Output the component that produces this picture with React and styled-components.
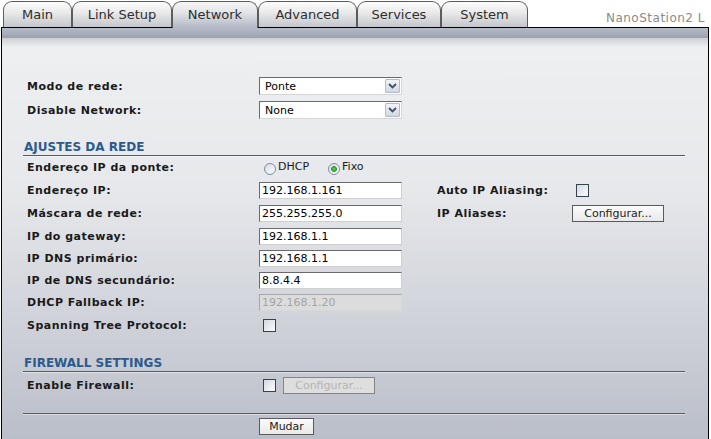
import React from 'react';
import styled, { createGlobalStyle } from 'styled-components';

const GlobalStyle = createGlobalStyle`
  html, body {
    margin: 0;
    padding: 0;
    background: #fff;
  }
  body {
    font-family: "DejaVu Sans", Verdana, sans-serif;
    overflow: hidden;
  }
`;

const TabBar = styled.div`
  display: flex;
  align-items: flex-end;
  height: 27px;
  padding-left: 3px;
`;

const Tab = styled.div`
  box-sizing: border-box;
  width: ${p => p.$w}px;
  height: ${p => (p.$active ? 27 : 26)}px;
  margin-bottom: ${p => (p.$active ? -1 : 0)}px;
  position: relative;
  z-index: ${p => (p.$active ? 1 : 0)};
  border: 1px solid #5c5c5c;
  border-bottom: none;
  border-radius: 9px 9px 0 0;
  background: ${p =>
    p.$active
      ? 'linear-gradient(#f5f5f5, #e2e4e8 40%, #b1b7c5)'
      : 'linear-gradient(#fcfcfc, #ebebec 40%, #c4c6cb)'};
  display: flex;
  align-items: center;
  justify-content: center;
  padding-bottom: ${p => (p.$active ? 1 : 0)}px;
  font-size: 13px;
  color: #2e2e2e;
  cursor: pointer;
`;

const Brand = styled.div`
  margin-left: auto;
  align-self: center;
  padding-top: 8px;
  padding-right: 6px;
  font-size: 12px;
  letter-spacing: 0.5px;
  color: #8a8a8a;
`;

const Panel = styled.div`
  box-sizing: border-box;
  margin-left: 1px;
  width: 708px;
  border: 1px solid #000;
  border-bottom: none;
`;

const Band = styled.div`
  height: 10px;
  background: linear-gradient(#b4bac7, #a3a9b7 70%, #9aa0ae);
`;

const Content = styled.div`
  padding: 36px 0 40px 21px;
  background: linear-gradient(#cdced2 0, #eeeff1 9px, #e6e8eb 35%, #b4b8c4 100%);
`;

const Section = styled.div`
  width: 662px;
`;

const Heading = styled.div`
  margin-top: ${p => p.$top}px;
  padding-left: 1px;
  line-height: 16px;
  font-size: 12px;
  font-weight: bold;
  color: #2b5a8e;
  border-bottom: 1px solid #3d5e8e;
  box-shadow: 0 1px 0 rgba(255, 255, 255, 0.45);
`;

const Row = styled.div`
  display: grid;
  grid-template-columns: 232px 178px 135px 1fr;
  align-items: center;
  height: ${p => p.$h}px;
  padding-left: 4px;
`;

const Label = styled.div`
  font-size: 11px;
  font-weight: bold;
  letter-spacing: 0.5px;
  color: #1a1a1a;
  white-space: nowrap;
`;

const TextInput = styled.input`
  display: block;
  box-sizing: border-box;
  width: 143px;
  height: 17px;
  margin: 0;
  padding: 0 2px;
  border: 1px solid;
  border-color: #6a6a6a #cfcfcf #cfcfcf #6a6a6a;
  background: #fff;
  font-family: "DejaVu Sans", Verdana, sans-serif;
  font-size: 11px;
  color: #000;
  outline: none;

  &:disabled {
    background: #dcdcdc;
    color: #a4a4a4;
    border-color: #a6a6a6 #d8d8d8 #d8d8d8 #a6a6a6;
  }
`;

const SelectWrap = styled.div`
  position: relative;
  width: 143px;
  height: 18px;
`;

const Select = styled.select`
  display: block;
  box-sizing: border-box;
  appearance: none;
  width: 100%;
  height: 18px;
  margin: 0;
  padding: 0 0 0 5px;
  border: 1px solid;
  border-color: #6a6a6a #d6d6d6 #d6d6d6 #6a6a6a;
  border-radius: 0;
  background: #fff;
  font-family: "DejaVu Sans", Verdana, sans-serif;
  font-size: 11px;
  color: #000;
  outline: none;
`;

const ArrowBox = styled.span`
  position: absolute;
  top: 2px;
  right: 2px;
  box-sizing: border-box;
  width: 15px;
  height: 14px;
  border: 1px solid #b3bac9;
  border-radius: 1px;
  background: linear-gradient(#f1f3f7, #d3d8e1);
  display: flex;
  align-items: center;
  justify-content: center;
  pointer-events: none;
`;

const Button = styled.button`
  display: block;
  box-sizing: border-box;
  width: ${p => p.$w}px;
  height: 17px;
  margin: 0 0 0 ${p => p.$ml || 0}px;
  padding: 0;
  border: 1px solid #5a5a5a;
  background: linear-gradient(#fbfbfb, #e9e9e9);
  font-family: "DejaVu Sans", Verdana, sans-serif;
  font-size: 11px;
  color: #222;

  &:disabled {
    background: #dedede;
    color: #b4b4b4;
    border-color: #858585;
  }
`;

const Check = styled.input`
  appearance: none;
  box-sizing: border-box;
  width: 13px;
  height: 13px;
  margin: 0 0 0 4px;
  border: 1px solid #35434f;
  background: linear-gradient(135deg, #d3d8e1, #fbfcfd);
  flex: none;
`;

const Controls = styled.div`
  display: flex;
  align-items: center;
`;

const RadioOption = styled.label`
  display: flex;
  align-items: center;
  gap: 2px;
  margin-left: ${p => p.$ml}px;
  font-size: 11px;
  color: #1a1a1a;
`;

const Radio = styled.input`
  appearance: none;
  box-sizing: border-box;
  width: 12px;
  height: 12px;
  margin: 2px 0 0 0;
  border: 1px solid #7f8ea2;
  border-radius: 50%;
  background: ${p =>
    p.checked
      ? 'radial-gradient(circle, #6fd05c 0, #2f9a2a 2.6px, transparent 3.2px), linear-gradient(135deg, #d6dbe3, #fdfdfd)'
      : 'linear-gradient(135deg, #d6dbe3, #fdfdfd)'};
`;

const RadioText = styled.span`
  margin-top: -3px;
`;

const Divider = styled.div`
  height: 15px;
  border-bottom: 1px solid #3d5e8e;
  box-shadow: 0 1px 0 rgba(255, 255, 255, 0.45);
`;

const ButtonRow = styled.div`
  padding: 4px 0 0 236px;
`;

const Chevron = () => (
  <svg width="9" height="6" viewBox="0 0 9 6">
    <path d="M1 1 L4.5 4.5 L8 1" fill="none" stroke="#3f4f6e" strokeWidth="1.8" />
  </svg>
);

const tabs = [
  ['Main', 69],
  ['Link Setup', 100],
  ['Network', 86],
  ['Advanced', 99],
  ['Services', 84],
  ['System', 87],
];

const SelectField = ({ value }) => (
  <SelectWrap>
    <Select defaultValue={value}>
      <option>{value}</option>
    </Select>
    <ArrowBox>
      <Chevron />
    </ArrowBox>
  </SelectWrap>
);

const ipRows = [
  ['IP do gateway:', '192.168.1.1'],
  ['IP DNS primário:', '192.168.1.1'],
  ['IP de DNS secundário:', '8.8.4.4'],
];

const App = () => {
  return (
    <>
      <GlobalStyle />
      <TabBar>
        {tabs.map(([name, w]) => (
          <Tab key={name} $w={w} $active={name === 'Network'}>
            {name}
          </Tab>
        ))}
        <Brand>NanoStation2 L</Brand>
      </TabBar>
      <Panel>
        <Band />
        <Content>
          <Section>
            <Row $h={24}>
              <Label>Modo de rede:</Label>
              <SelectField value="Ponte" />
            </Row>
            <Row $h={24}>
              <Label>Disable Network:</Label>
              <SelectField value="None" />
            </Row>

            <Heading $top={17}>AJUSTES DA REDE</Heading>
            <Row $h={23}>
              <Label>Endereço IP da ponte:</Label>
              <Controls>
                <RadioOption $ml={5}>
                  <Radio type="radio" name="mode" readOnly />
                  <RadioText>DHCP</RadioText>
                </RadioOption>
                <RadioOption $ml={19}>
                  <Radio type="radio" name="mode" checked readOnly />
                  <RadioText>Fixo</RadioText>
                </RadioOption>
              </Controls>
            </Row>
            <Row $h={23}>
              <Label>Endereço IP:</Label>
              <TextInput defaultValue="192.168.1.161" />
              <Label>Auto IP Aliasing:</Label>
              <Controls>
                <Check type="checkbox" />
              </Controls>
            </Row>
            <Row $h={23}>
              <Label>Máscara de rede:</Label>
              <TextInput defaultValue="255.255.255.0" />
              <Label>IP Aliases:</Label>
              <Controls>
                <Button $w={92}>Configurar...</Button>
              </Controls>
            </Row>
            {ipRows.map(([label, value]) => (
              <Row key={label} $h={22}>
                <Label>{label}</Label>
                <TextInput defaultValue={value} />
              </Row>
            ))}
            <Row $h={22}>
              <Label>DHCP Fallback IP:</Label>
              <TextInput defaultValue="192.168.1.20" disabled />
            </Row>
            <Row $h={24}>
              <Label>Spanning Tree Protocol:</Label>
              <Controls>
                <Check type="checkbox" />
              </Controls>
            </Row>

            <Heading $top={18}>FIREWALL SETTINGS</Heading>
            <Row $h={26}>
              <Label>Enable Firewall:</Label>
              <Controls>
                <Check type="checkbox" />
                <Button $w={92} $ml={7} disabled>
                  Configurar...
                </Button>
              </Controls>
            </Row>
            <Divider />
            <ButtonRow>
              <Button $w={55}>Mudar</Button>
            </ButtonRow>
          </Section>
        </Content>
      </Panel>
    </>
  );
};

export default App;
